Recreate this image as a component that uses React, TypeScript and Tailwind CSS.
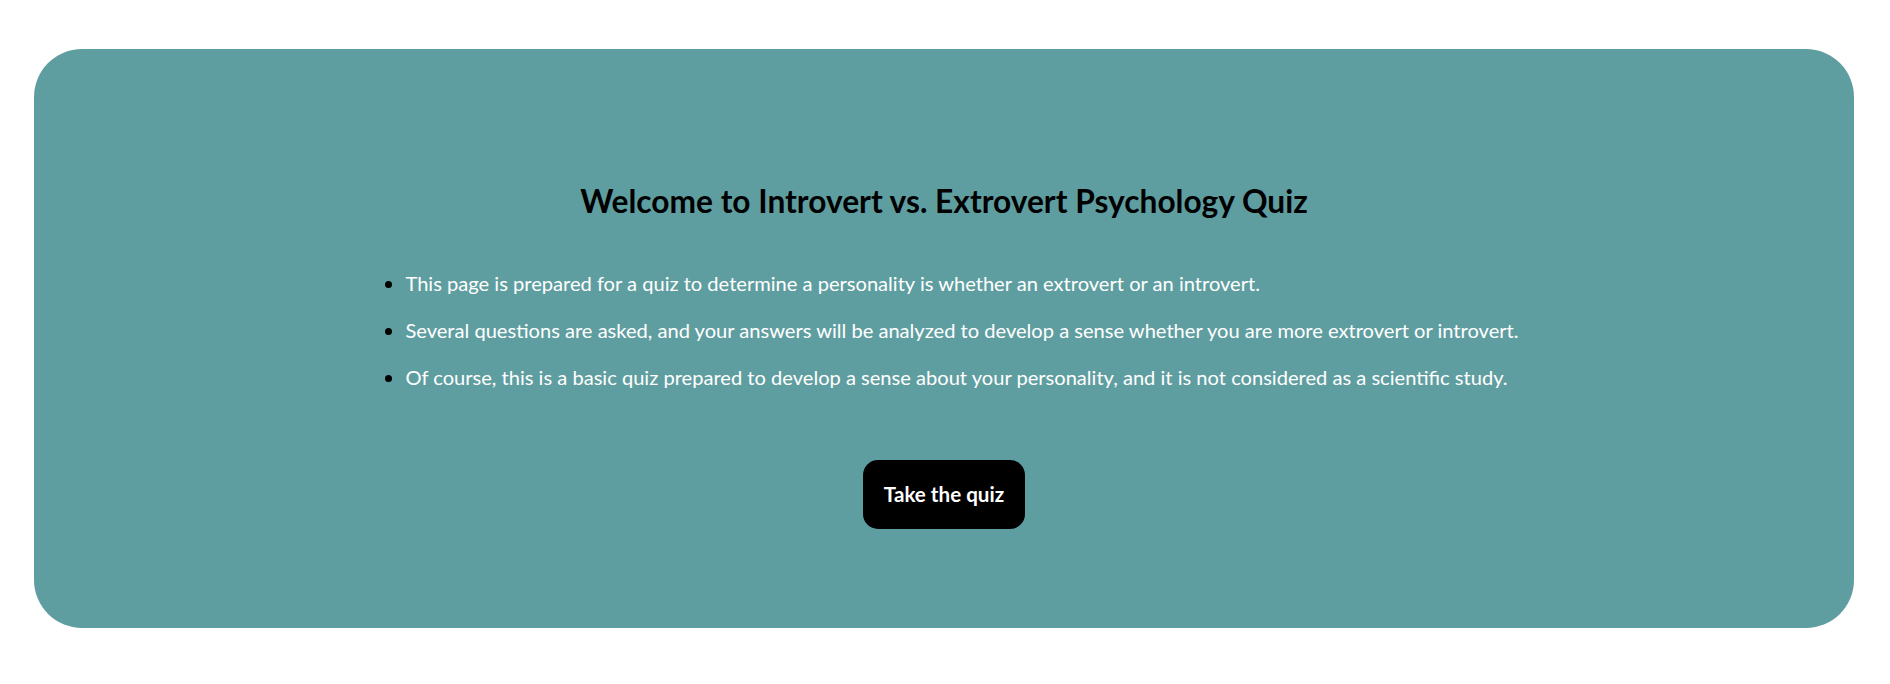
import React from "react";

export default function App() {
  return (
    <div className="w-[1890px] h-[684px] bg-white pt-[49px] pl-[34px] pr-[36px]" style={{ fontFamily: 'Lato, "Open Sans", sans-serif' }}>
      <div className="h-[579px] rounded-[48px] bg-[#5F9EA0] flex flex-col items-center pt-[132px]">
        <h2 className="text-[31.7px] leading-[40px] font-bold text-black">Welcome to Introvert vs. Extrovert Psychology Quiz</h2>
        <ul className="mt-[48px] pl-[36px] list-disc text-white text-[20.1px] leading-[28px] marker:text-black flex flex-col gap-[19px]">
          <li>This page is prepared for a quiz to determine a personality is whether an extrovert or an introvert.</li>
          <li>Several questions are asked, and your answers will be analyzed to develop a sense whether you are more extrovert or introvert.</li>
          <li>Of course, this is a basic quiz prepared to develop a sense about your personality, and it is not considered as a scientific study.</li>
        </ul>
        <button className="mt-[69px] w-[162px] h-[69px] rounded-[15px] bg-black text-white font-bold text-[20.6px]">Take the quiz</button>
      </div>
    </div>
  );
}
